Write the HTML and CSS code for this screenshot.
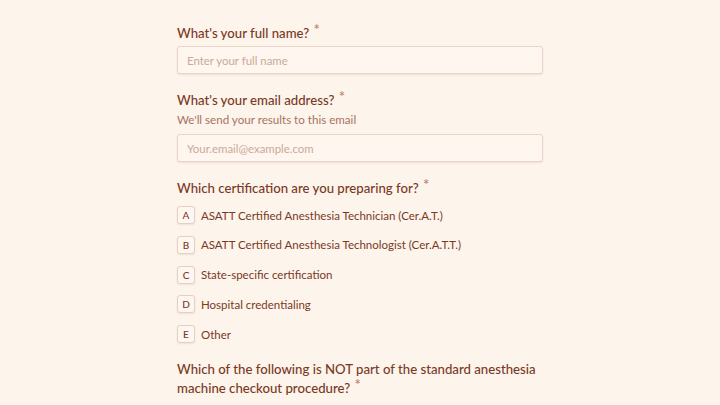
FILE: index.html
```html
<!DOCTYPE html>
<html lang="en">
<head>
    <meta charset="UTF-8">
    <meta name="viewport" content="width=device-width, initial-scale=1.0">
    <title>Anesthesia Technician Quiz</title>
    <link rel="stylesheet" href="styles.css">
</head>
<body>
    <div class="form">

        <div class="question">
            <label class="label" for="fullName">What's your full name? <span class="req">*</span></label>
            <input type="text" id="fullName" placeholder="Enter your full name">
        </div>

        <div class="question">
            <label class="label" for="email">What's your email address? <span class="req">*</span></label>
            <p class="hint">We'll send your results to this email</p>
            <input type="email" id="email" placeholder="Your.email@example.com">
        </div>

        <div class="question">
            <div class="label">Which certification are you preparing for? <span class="req">*</span></div>
            <div class="options">
                <div class="option"><span class="key">A</span>ASATT Certified Anesthesia Technician (Cer.A.T.)</div>
                <div class="option"><span class="key">B</span>ASATT Certified Anesthesia Technologist (Cer.A.T.T.)</div>
                <div class="option"><span class="key">C</span>State-specific certification</div>
                <div class="option"><span class="key">D</span>Hospital credentialing</div>
                <div class="option"><span class="key">E</span>Other</div>
            </div>
        </div>

        <div class="question">
            <div class="label">Which of the following is NOT part of the standard anesthesia machine checkout procedure? <span class="req">*</span></div>
        </div>

    </div>
</body>
</html>
```

FILE: styles.css
```css
body {
    margin: 0;
    background-color: #fdf4ec;
    font-family: Lato, "Noto Sans", sans-serif;
    color: #7a3924;
}
.form {
    width: 366px;
    margin: 0 auto;
    padding-top: 24px;
}
.question {
    margin-bottom: 17px;
}
.label {
    display: block;
    font-size: 13.2px;
    font-weight: 500;
    line-height: 19px;
    margin-bottom: 3px;
}
.req {
    color: #c0826c;
    font-size: 15px;
    line-height: 0;
    vertical-align: 3px;
    margin-left: 1px;
}
.hint {
    margin: -1px 0 6px;
    font-size: 11.6px;
    line-height: 16px;
    color: #a5735f;
}
input {
    box-sizing: border-box;
    width: 100%;
    height: 28px;
    padding: 0 9px;
    border: 1px solid #e9d6c8;
    border-radius: 3px;
    background-color: #fef6ef;
    box-shadow: 0 1px 2px rgba(120, 70, 40, 0.12);
    font-family: inherit;
    font-size: 11.4px;
    color: #7a3924;
}
input::placeholder {
    color: #c9a999;
}
.options {
    padding-top: 5px;
}
.option {
    display: flex;
    align-items: center;
    height: 18px;
    margin-bottom: 11.75px;
    font-size: 11.5px;
    color: #7a3924;
}
.key {
    box-sizing: border-box;
    width: 18px;
    height: 18px;
    margin-right: 6px;
    display: flex;
    align-items: center;
    justify-content: center;
    border: 1px solid #e6d0c2;
    border-radius: 3px;
    background-color: #fef7f1;
    box-shadow: 0 1px 2px rgba(120, 70, 40, 0.1);
    font-size: 10px;
    font-weight: 500;
    color: #7a3924;
}
```
